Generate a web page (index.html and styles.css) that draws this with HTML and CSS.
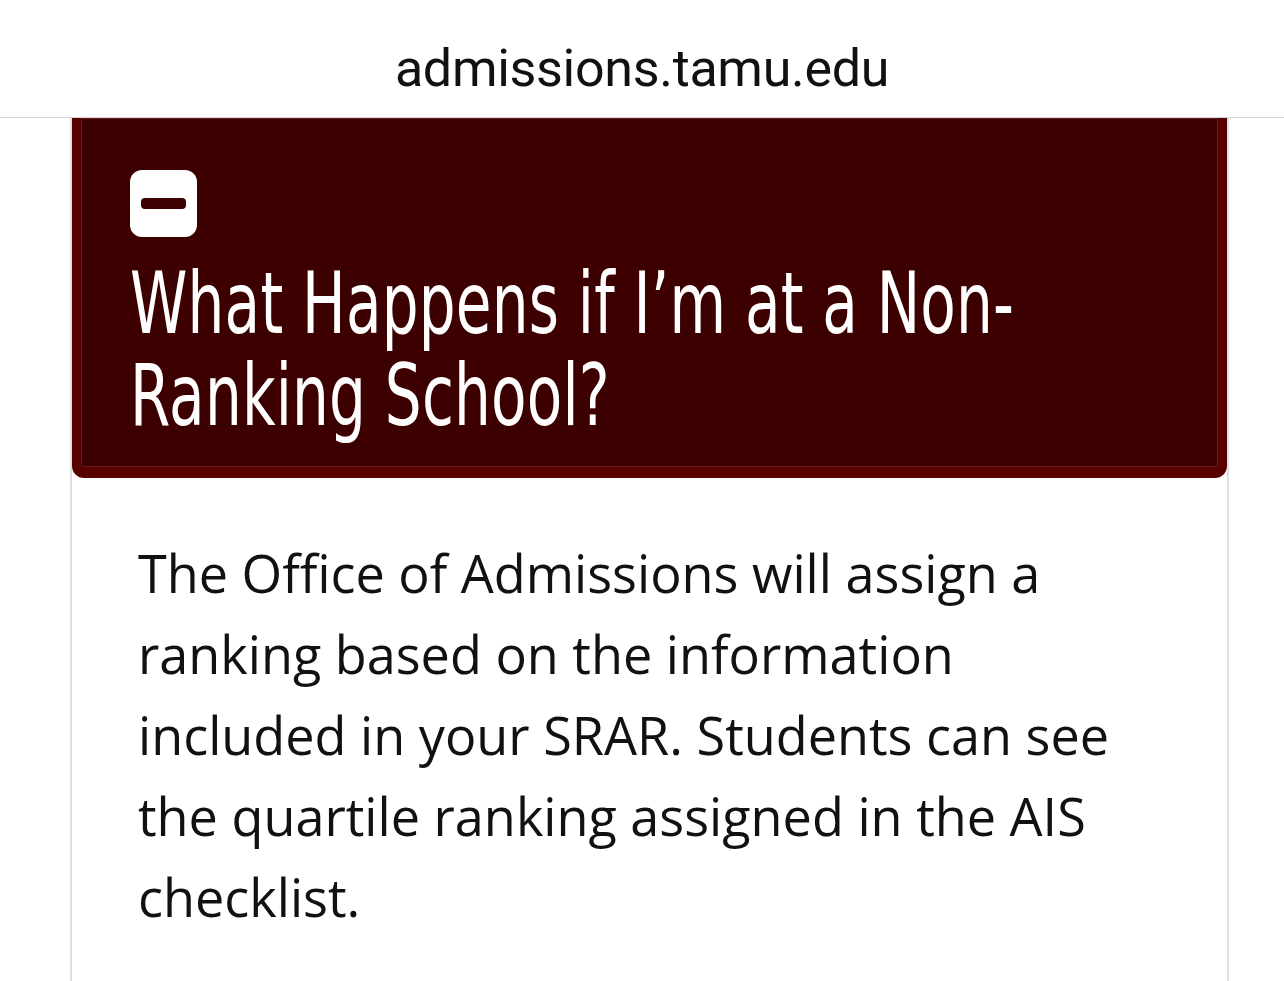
FILE: index.html
```html
<!DOCTYPE html>
<html lang="en">
<head>
<meta charset="utf-8">
<title>What Happens if I'm at a Non-Ranking School?</title>
<link rel="stylesheet" href="styles.css">
</head>
<body>
<header class="topbar">
  <div class="url">admissions.tamu.edu</div>
</header>
<main class="page">
  <section class="card">
    <div class="card-head">
      <div class="toggle" aria-label="Collapse">
        <span class="toggle-bar"></span>
      </div>
      <h2 class="card-title">What Happens if I’m at a Non-Ranking School?</h2>
    </div>
    <div class="card-body">
      <p class="card-text">The Office of Admissions will assign a ranking based on the information included in your SRAR. Students can see the quartile ranking assigned in the AIS checklist.</p>
    </div>
  </section>
</main>
</body>
</html>
```

FILE: styles.css
```css
html, body {
  margin: 0;
  padding: 0;
  background: #ffffff;
  overflow: hidden;
}

body {
  width: 1284px;
  height: 981px;
}

.topbar {
  height: 117px;
  border-bottom: 1px solid #d4d4d4;
  display: flex;
  justify-content: center;
  align-items: flex-start;
  background: #ffffff;
}

.url {
  font-family: Roboto, "Liberation Sans", sans-serif;
  font-size: 52px;
  color: #111111;
  margin-top: 39px;
  line-height: 60px;
  letter-spacing: -0.3px;
}

.page {
  padding: 0 55px 0 70px;
}

.card {
  border-left: 2px solid #e0e0e0;
  border-right: 2px solid #e0e0e0;
  height: 900px;
  overflow: hidden;
}

.card-head {
  background: #3d0000;
  border: 9px solid #560000;
  border-top: 0;
  border-bottom-width: 11px;
  border-radius: 0 0 12px 12px;
  box-shadow: inset 0 0 0 1px #6a1c1c;
  padding: 52px 0 26px 49px;
  color: #ffffff;
  overflow: hidden;
}

.toggle {
  width: 67px;
  height: 67px;
  background: #ffffff;
  border-radius: 12px;
  display: flex;
  align-items: center;
  justify-content: center;
}

.toggle-bar {
  width: 45px;
  height: 11px;
  border-radius: 4px;
  background: #3d0000;
}

.card-title {
  margin: 20px 0 0;
  width: 1400px;
  font-family: "DejaVu Sans", sans-serif;
  font-stretch: condensed;
  font-weight: 400;
  font-size: 86px;
  line-height: 92px;
  letter-spacing: 0.3px;
  transform: scaleX(0.75);
  transform-origin: left top;
}

.card-body {
  padding: 54px 66px 0 66px;
}

.card-text {
  margin: 0;
  font-family: "Open Sans", "Noto Sans", sans-serif;
  font-size: 52.2px;
  line-height: 81px;
  color: #111111;
}
```
